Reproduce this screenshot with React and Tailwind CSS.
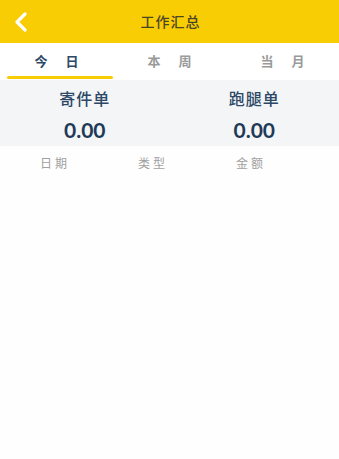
import React, { useState } from 'react';

const tabs = ['今日', '本周', '当月'];

const App = () => {
  const [active, setActive] = useState(0);

  return (
    <div className="min-h-[459px] w-full bg-[#fefefe] font-['Noto_Sans_CJK_SC',sans-serif]">
      {/* Header */}
      <div className="relative flex h-[43px] items-center justify-center bg-[#f9cd03]">
        <button className="absolute left-[13px] top-[11px] flex h-[21px] w-[16px] items-center justify-center">
          <svg width="14" height="20" viewBox="0 0 14 20" fill="none">
            <path d="M11 2 L3 10 L11 18" stroke="#ffffff" strokeWidth="3.2" strokeLinecap="round" strokeLinejoin="round" />
          </svg>
        </button>
        <h1 className="pl-[2px] text-[14px] font-medium tracking-[1px] text-[#4a4526]">工作汇总</h1>
      </div>

      {/* Tabs */}
      <div className="flex h-[37px] bg-white">
        {tabs.map((t, i) => (
          <button
            key={t}
            onClick={() => setActive(i)}
            className="relative flex flex-1 items-center justify-center pb-[2px]"
          >
            <span
              className={`pl-[18px] text-[13px] font-bold tracking-[18px] ${
                i === active ? 'text-[#2c4866]' : 'text-[#9a9a9a]'
              }`}
            >
              {t}
            </span>
            {i === active && (
              <span className="absolute bottom-[1px] left-[7px] right-0 h-[3px] rounded-full bg-[#f9cd03]" />
            )}
          </button>
        ))}
      </div>

      {/* Summary */}
      <div className="grid h-[66px] grid-cols-2 bg-[#f3f5f6]">
        {['寄件单', '跑腿单'].map((label) => (
          <div key={label} className="flex flex-col items-center pt-[8px]">
            <span className="text-[16px] leading-[20px] font-medium tracking-[1px] text-[#2c4866]">{label}</span>
            <span className="mt-[10px] font-['Lato',sans-serif] text-[21px] leading-[24px] font-bold text-[#1e3a56]">0.00</span>
          </div>
        ))}
      </div>

      {/* Table head */}
      <div className="flex pl-[40px] pt-[8px]">
        {['日期', '类型', '金额'].map((h) => (
          <span key={h} className="w-[98px] text-[12px] leading-[18px] tracking-[3px] text-[#a0a0a0]">
            {h}
          </span>
        ))}
      </div>
    </div>
  );
};

export default App;
